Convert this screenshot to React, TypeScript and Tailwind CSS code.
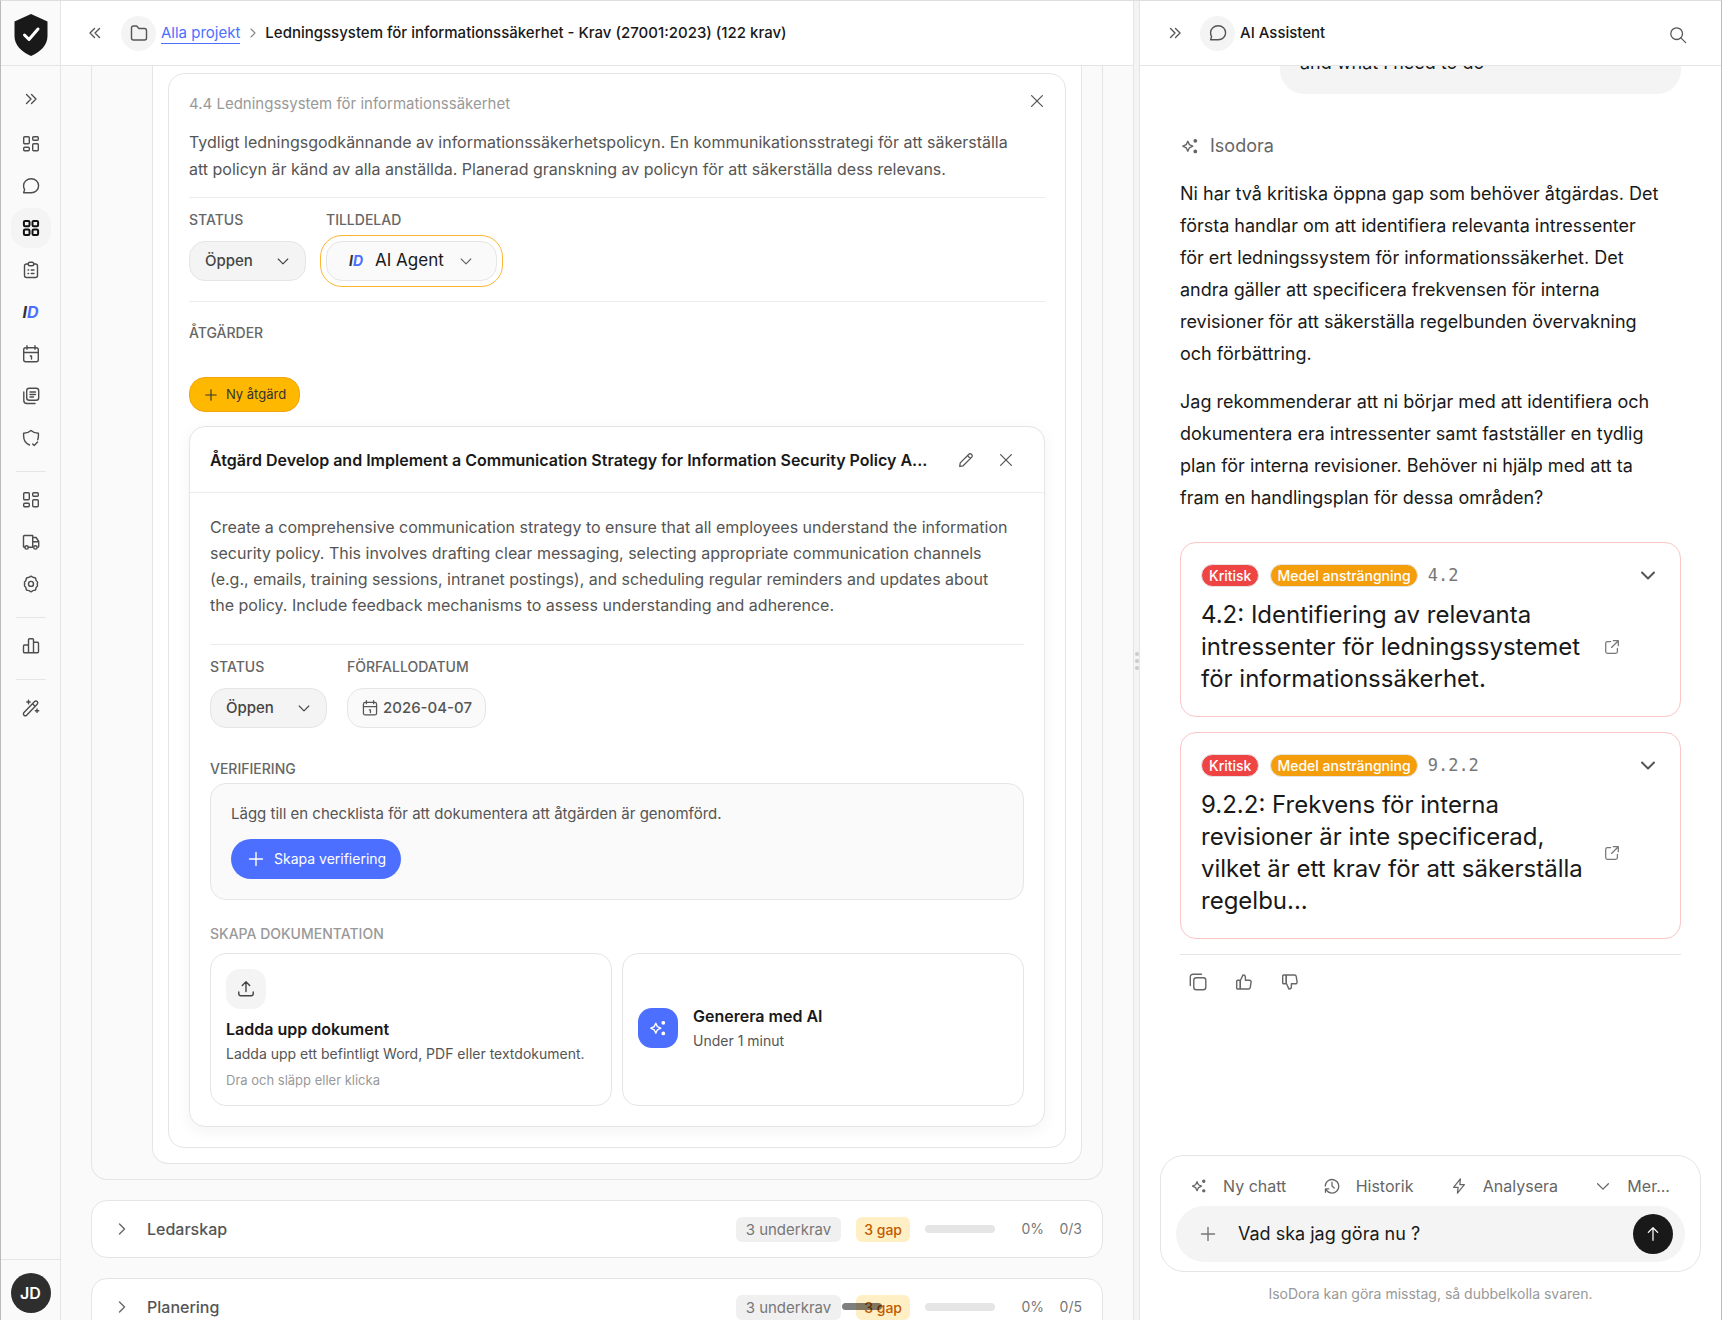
import * as React from 'react';

type IconProps = {
  name: keyof typeof icons;
  className?: string;
};

// Контуры иконок на сетке 20x20
const icons = {
  chevronsRight: <path d="m5.5 5.5 4.5 4.5-4.5 4.5m5-9 4.5 4.5-4.5 4.5" />,
  chevronsLeft: <path d="M14.5 5.5 10 10l4.5 4.5m-5-9L5 10l4.5 4.5" />,
  chevronRight: <path d="m7.5 5 5 5-5 5" />,
  chevronDown: <path d="m4 7.5 6 6 6-6" />,
  dashboard: (
    <>
      <rect x="2.7" y="2.7" width="5.6" height="7" rx="1" />
      <rect x="11.7" y="2.7" width="5.6" height="3.6" rx="1" />
      <rect x="2.7" y="13.2" width="5.6" height="3.6" rx="1" />
      <rect x="11.7" y="9.8" width="5.6" height="7" rx="1" />
    </>
  ),
  grid: (
    <>
      <rect x="2.9" y="2.9" width="5.6" height="5.4" rx="1.2" />
      <rect x="11.5" y="2.9" width="5.6" height="5.4" rx="1.2" />
      <rect x="2.9" y="11.6" width="5.6" height="5.4" rx="1.2" />
      <rect x="11.5" y="11.6" width="5.6" height="5.4" rx="1.2" />
    </>
  ),
  chat: (
    <path d="M10.2 2.8c4.2 0 7.4 3 7.4 7s-3.2 7-7.4 7H2.6l1-3.2a6.8 6.8 0 0 1-1-4c0-4 3.4-6.8 7.6-6.8Z" />
  ),
  clipboard: (
    <>
      <path d="M7.2 4H5.5a2 2 0 0 0-2 2v9.5a2 2 0 0 0 2 2h9a2 2 0 0 0 2-2V6a2 2 0 0 0-2-2h-1.7" />
      <rect x="7.2" y="2.2" width="5.6" height="3.6" rx="1.8" />
      <path d="M7 10h.6m2.6 0H13m-6 3.5h.6m2.6 0H13" />
    </>
  ),
  calendar: (
    <>
      <rect x="2.7" y="3.7" width="14.6" height="14" rx="2" />
      <path d="M2.7 8.5h14.6M6 1.8v3.4m8-3.4v3.4M9.3 12h1.2v3" />
    </>
  ),
  documents: (
    <>
      <rect x="5.7" y="2.3" width="12" height="12" rx="2.5" />
      <path d="M9 6h5.5M9 8.5h5.5M9 11h3.5M2.8 6v8.5a3 3 0 0 0 3 3H14" />
    </>
  ),
  shield: (
    <path d="M8.5 17c-3.6-1.6-5.9-4.7-5.9-9.3V5.2C5.7 5.2 8 4.2 10 2.4c2 1.8 4.3 2.8 7.4 2.8v2.5c0 1.6-.2 2.9-.7 4.1M11.7 16l1.5 1.5 3.4-3.4" />
  ),
  truck: (
    <>
      <path d="M3.9 15.2h-.4a1 1 0 0 1-1-1V4.5a1 1 0 0 1 1-1h8.200v11.700H7.300M11.700 5.500h3.400l2.600 4v4.700a1 1 0 0 1-1 1M11.700 9.800h5.800" />
      <circle cx="5.6" cy="15.4" r="1.7" />
      <circle cx="14.4" cy="15.4" r="1.7" />
    </>
  ),
  gear: (
    <>
      <path d="M8.600 2.900a2 2 0 0 1 2.800 0 2 2 0 0 0 1.500.6 2 2 0 0 1 2 2 2 2 0 0 0 .7 1.500 2 2 0 0 1 .6 2.900 2 2 0 0 0 0 .2 2 2 0 0 1-.6 2.800 2 2 0 0 0-.7 1.500 2 2 0 0 1-2 2 2 2 0 0 0-1.500.6 2 2 0 0 1-2.800 0 2 2 0 0 0-1.500-.6 2 2 0 0 1-2-2 2 2 0 0 0-.7-1.500 2 2 0 0 1-.6-2.900 2 2 0 0 1 .6-2.900 2 2 0 0 0 .7-1.600 2 2 0 0 1 2-2 2 2 0 0 0 1.500-.6Z" />
      <circle cx="10" cy="9.9" r="2.5" />
    </>
  ),
  chart: (
    <path d="M7.5 16.800h-4a1 1 0 0 1-1-1V10a1 1 0 0 1 1-1h4m0 7.800V3.700a1 1 0 0 1 1-1h3a1 1 0 0 1 1 1v13.100m-5 0h5m0-10.600h4a1 1 0 0 1 1 1v8.600a1 1 0 0 1-1 1h-4" />
  ),
  wand: (
    <>
      <path d="M13.600 3.600a1.700 1.700 0 0 1 2.600 2.600L5.600 17.200a1.700 1.700 0 0 1-2.600-2.600Zm-2 2.200 2.600 2.600" />
      <path d="M7.5 2.300v3.400m-1.700-1.700h3.400m6.800 7v3.400m-1.700-1.700h3.400" />
    </>
  ),
  folder: (
    <path d="M2.5 5a2 2 0 0 1 2-2h3.200l2.200 2.500h5.600a2 2 0 0 1 2 2V15a2 2 0 0 1-2 2h-11a2 2 0 0 1-2-2Z" />
  ),
  close: <path d="m4 4 12 12m0-12-12 12" />,
  plus: <path d="M10 3.5v13M3.5 10h13" />,
  pencil: <path d="m3 17 .6-3.8L13.2 3.6a1.900 1.900 0 0 1 2.700 0l.5.5a1.900 1.900 0 0 1 0 2.700L6.800 16.400Zm8.700-11.900 3.200 3.200" />,
  upload: <path d="M10 12.5V2.8M6.3 6.5 10 2.800l3.700 3.700M2.800 13v1.800a2 2 0 0 0 2 2h10.400a2 2 0 0 0 2-2V13" />,
  sparkle: (
    <>
      <path d="M7.8 5.2 9.4 8.6 12.8 10.2 9.4 11.8 7.8 15.2 6.2 11.8 2.8 10.2 6.2 8.6Z" />
      <circle cx="15.3" cy="4.8" r="1.2" fill="currentColor" />
      <circle cx="15.3" cy="15.4" r="1.2" fill="currentColor" />
    </>
  ),
  search: (
    <>
      <circle cx="8.5" cy="8.5" r="6.5" />
      <path d="m13.2 13.200 5.300 5.300" />
    </>
  ),
  external: <path d="M8.5 4H5a2 2 0 0 0-2 2v9a2 2 0 0 0 2 2h9a2 2 0 0 0 2-2v-3.500M11.500 3H17v5.500M17 3l-7.500 7.500" />,
  copy: (
    <>
      <rect x="5.8" y="5.8" width="12" height="12" rx="2.5" />
      <path d="M2.3 13.5V5a2.700 2.700 0 0 1 2.700-2.700h8.500" />
    </>
  ),
  thumbUp: (
    <>
      <path d="M6.3 8.700 9 2.900c1.400 0 2.400 1 2.400 2.300v3h4a1.700 1.700 0 0 1 1.700 2l-.9 5.400a1.700 1.700 0 0 1-1.700 1.400H6.300Z" />
      <rect x="2.7" y="8.2" width="3.6" height="8.8" rx="1" />
    </>
  ),
  thumbDown: (
    <>
      <path d="M6.3 11.300 9 17.100c1.400 0 2.400-1 2.400-2.300v-3h4a1.700 1.700 0 0 0 1.700-2l-.9-5.400A1.700 1.700 0 0 0 14.500 3H6.300Z" />
      <rect x="2.7" y="3" width="3.6" height="8.8" rx="1" />
    </>
  ),
  history: <path d="M3.2 13.5a7.500 7.500 0 1 0-.7-3.500m.2 7v-3.700h3.800M10 5.800V10l2.400 2.200" />,
  bolt: <path d="M11.5 2 4 11.500h5L8.300 18 16 8.500h-5Z" />,
  arrowUp: <path d="M10 17V3M4.800 8.200 10 3l5.200 5.200" />,
};

const Icon = ({ name, className = 'size-5' }: IconProps) => (
  <svg
    viewBox="0 0 20 20"
    fill="none"
    stroke="currentColor"
    strokeWidth="1.4"
    strokeLinecap="round"
    strokeLinejoin="round"
    aria-hidden="true"
    className={`shrink-0 ${className}`}>
    {icons[name]}
  </svg>
);

const IdLogo = ({ className = 'text-base' }: { className?: string }) => (
  <span className={`font-bold italic leading-none text-[#333] ${className}`}>
    I<span className="text-[#4c6fff]">D</span>
  </span>
);

type NavItem = { icon?: keyof typeof icons; label: string; active?: boolean };

const navGroups: NavItem[][] = [
  [
    { icon: 'dashboard', label: 'Översikt' },
    { icon: 'chat', label: 'Chatt' },
    { icon: 'grid', label: 'Projekt', active: true },
    { icon: 'clipboard', label: 'Uppgifter' },
    { label: 'IsoDora' },
    { icon: 'calendar', label: 'Kalender' },
    { icon: 'documents', label: 'Dokument' },
    { icon: 'shield', label: 'Risker' },
  ],
  [
    { icon: 'dashboard', label: 'Tillgångar' },
    { icon: 'truck', label: 'Leverantörer' },
    { icon: 'gear', label: 'Inställningar' },
  ],
  [{ icon: 'chart', label: 'Rapporter' }],
  [{ icon: 'wand', label: 'Verktyg' }],
];

const sections = [
  { title: 'Ledarskap', done: '0/3' },
  { title: 'Planering', done: '0/5' },
];

const gaps = [
  {
    id: '4.2',
    title: '4.2: Identifiering av relevanta intressenter för ledningssystemet för informationssäkerhet.',
  },
  {
    id: '9.2.2',
    title: '9.2.2: Frekvens för interna revisioner är inte specificerad, vilket är ett krav för att säkerställa regelbu...',
  },
];

const chatActions: { icon: keyof typeof icons; label: string }[] = [
  { icon: 'sparkle', label: 'Ny chatt' },
  { icon: 'history', label: 'Historik' },
  { icon: 'bolt', label: 'Analysera' },
  { icon: 'chevronDown', label: 'Mer...' },
];

const Sidebar = () => (
  <aside className="flex w-[60px] shrink-0 flex-col border-r border-[#e5e5e5] bg-[#fafafa]">
    <div className="flex h-[65px] shrink-0 items-center justify-center border-b border-[#e5e5e5] pt-[3px]">
      <svg viewBox="0 0 34 42" className="h-[42px] w-[34px]" aria-label="IsoDora">
        <path d="M17 0 33.500 7.500V22c0 9-6.500 15.500-16.500 20C7 37.500.5 31 .5 22V7.500Z" fill="#191919" />
        <path d="m10.500 21 4.500 4.500 9-10.500" fill="none" stroke="#fff" strokeWidth="3" strokeLinecap="round" strokeLinejoin="round" />
      </svg>
    </div>
    <nav className="flex grow flex-col items-center pt-[13px] text-[#4d4d4d]">
      <button type="button" aria-label="Expandera meny" className="mb-[5px] flex size-10 items-center justify-center">
        <Icon name="chevronsRight" />
      </button>
      {navGroups.map((group, index) => (
        <div key={index} className="flex w-full flex-col items-center">
          {index > 0 && <hr className="mt-[13px] mb-2 w-[30px] border-[#e5e5e5]" />}
          <div className="flex flex-col gap-[2px]">
            {group.map((item) => (
              <button
                key={item.label}
                type="button"
                aria-label={item.label}
                className={`flex size-10 items-center justify-center rounded-2xl ${
                  item.active ? 'bg-[#f4f4f4] text-[#111]' : ''
                }`}>
                {item.icon ? (
                  <Icon name={item.icon} className={item.active ? 'size-5 stroke-2' : 'size-5'} />
                ) : (
                  <IdLogo />
                )}
              </button>
            ))}
          </div>
        </div>
      ))}
    </nav>
    <div className="flex justify-center border-t border-[#e5e5e5] pt-[13px] pb-[7px]">
      <button type="button" className="size-10 rounded-full bg-[#2e2e2e] text-base font-semibold text-white">
        JD
      </button>
    </div>
  </aside>
);

const StatusSelect = ({ id }: { id: string }) => (
  <div className="flex flex-col gap-[11px]">
    <label htmlFor={id} className="text-sm font-medium text-[#666]">
      STATUS
    </label>
    <div className="flex h-10 w-[117px] items-center rounded-2xl border border-[#e5e5e5] bg-[#f4f4f4] pr-[14px] pl-[15px] text-[#444]">
      <select id={id} className="min-w-0 grow appearance-none text-[15px] font-medium outline-none">
        <option>Öppen</option>
        <option>Stängd</option>
      </select>
      <Icon name="chevronDown" className="size-4" />
    </div>
  </div>
);

const ActionCard = () => (
  <section className="rounded-2xl border border-[#e5e5e5] bg-white shadow-[0_4px_16px_rgba(0,0,0,0.05)]">
    <header className="flex h-[66px] items-center border-b border-[#ececec] pr-[18px] pl-5">
      <h3 className="min-w-0 grow truncate text-base font-semibold text-[#191919]">
        Åtgärd Develop and Implement a Communication Strategy for Information Security Policy A...
      </h3>
      <div className="flex shrink-0 text-[#555]">
        <button type="button" aria-label="Redigera" className="flex size-10 items-center justify-center">
          <Icon name="pencil" className="size-[18px]" />
        </button>
        <button type="button" aria-label="Stäng åtgärd" className="flex size-10 items-center justify-center">
          <Icon name="close" className="size-[18px]" />
        </button>
      </div>
    </header>
    <div className="px-5 pt-[21px] pb-5">
      <p className="pr-3 text-base leading-[26px] text-[#555]">
        Create a comprehensive communication strategy to ensure that all employees understand the information
        security policy. This involves drafting clear messaging, selecting appropriate communication channels
        (e.g., emails, training sessions, intranet postings), and scheduling regular reminders and updates about
        the policy. Include feedback mechanisms to assess understanding and adherence.
      </p>
      <div className="mt-[26px] flex gap-5 border-t border-[#ececec] pt-3">
        <StatusSelect id="action-status" />
        <div className="flex flex-col gap-[11px]">
          <label htmlFor="due-date" className="text-sm font-medium text-[#666]">
            FÖRFALLODATUM
          </label>
          <button
            id="due-date"
            type="button"
            className="flex h-10 w-[139px] items-center gap-1 rounded-2xl border border-[#e5e5e5] bg-[#fafafa] px-[13px] text-[15px] font-medium text-[#555]">
            <Icon name="calendar" className="size-[18px]" />
            2026-04-07
          </button>
        </div>
      </div>
      <h4 className="mt-[31px] text-sm font-medium text-[#666]">VERIFIERING</h4>
      <div className="mt-1 rounded-2xl border border-[#e5e5e5] bg-[#fafafa] p-5 pt-[18px]">
        <p className="text-[15px] leading-6 text-[#555]">Lägg till en checklista för att dokumentera att åtgärden är genomförd.</p>
        <button
          type="button"
          className="mt-[13px] flex h-10 items-center gap-2 rounded-[20px] bg-[#4c6fff] px-[15px] text-sm text-white">
          <Icon name="plus" />
          Skapa verifiering
        </button>
      </div>
      <h4 className="mt-6 text-sm font-medium text-[#999]">SKAPA DOKUMENTATION</h4>
      <div className="mt-[9px] grid grid-cols-2 gap-[10px]">
        <button type="button" className="rounded-2xl border border-[#e5e5e5] p-[15px] text-left">
          <span className="flex size-10 items-center justify-center rounded-[14px] bg-[#f4f4f4] text-[#444]">
            <Icon name="upload" />
          </span>
          <span className="mt-2 block text-base font-semibold text-[#191919]">Ladda upp dokument</span>
          <span className="mt-[3px] block text-sm text-[#555]">Ladda upp ett befintligt Word, PDF eller textdokument.</span>
          <span className="mt-[6px] block text-[13px] leading-5 text-[#999]">Dra och släpp eller klicka</span>
        </button>
        <button type="button" className="flex items-center gap-[15px] rounded-2xl border border-[#e5e5e5] px-[15px] pb-1 text-left">
          <span className="flex size-10 items-center justify-center rounded-[14px] bg-[#4c6fff] text-white">
            <Icon name="sparkle" />
          </span>
          <span>
            <span className="block text-base font-semibold text-[#191919]">Generera med AI</span>
            <span className="mt-[3px] block text-sm text-[#555]">Under 1 minut</span>
          </span>
        </button>
      </div>
    </div>
  </section>
);

const RequirementPanel = () => (
  <div className="rounded-b-2xl border border-t-0 border-[#e5e5e5] pr-5 pb-[15px] pl-[60px]">
    <div className="rounded-b-2xl border border-t-0 border-[#e5e5e5] bg-white px-[15px] pt-[7px] pb-[15px]">
      <article className="rounded-2xl border border-[#e5e5e5] px-5 pt-[15px] pb-5">
        <div className="flex items-start justify-between">
          <h2 className="mt-[3px] text-[15px] leading-6 text-[#999]">4.4 Ledningssystem för informationssäkerhet</h2>
          <button type="button" aria-label="Stäng krav" className="-mr-1 flex size-6 items-center justify-center text-[#555]">
            <Icon name="close" className="size-[18px]" />
          </button>
        </div>
        <p className="mt-[13px] pr-5 text-base leading-[27px] text-[#555]">
          Tydligt ledningsgodkännande av informationssäkerhetspolicyn. En kommunikationsstrategi för att säkerställa
          att policyn är känd av alla anställda. Planerad granskning av policyn för att säkerställa dess relevans.
        </p>
        <div className="mt-[14px] flex gap-5 border-y border-[#ececec] pt-3 pb-5">
          <StatusSelect id="requirement-status" />
          <div className="flex flex-col gap-[11px]">
            <label htmlFor="assignee" className="text-sm font-medium text-[#666]">
              TILLDELAD
            </label>
            <div className="flex h-10 w-[171px] items-center rounded-2xl border border-[#e5e5e5] bg-[#fafafa] px-[22px] outline outline-offset-[5px] outline-[#fdb62f]">
              <IdLogo className="mr-3 text-sm" />
              <select id="assignee" className="min-w-0 grow appearance-none text-[17px] text-[#191919] outline-none">
                <option>AI Agent</option>
              </select>
              <Icon name="chevronDown" className="size-4 text-[#666]" />
            </div>
          </div>
        </div>
        <h3 className="mt-[21px] text-sm font-medium text-[#666]">ÅTGÄRDER</h3>
        <button
          type="button"
          className="mt-[34px] mb-[14px] flex h-[35px] items-center gap-[7px] rounded-2xl border border-[#f5a310] bg-[#ffb800] px-[13px] text-[13px] text-[#333]">
          <Icon name="plus" className="size-4" />
          Ny åtgärd
        </button>
        <ActionCard />
      </article>
    </div>
  </div>
);

const SectionRow = ({ title, done }: { title: string; done: string }) => (
  <button
    type="button"
    className="mt-5 flex h-[58px] w-full shrink-0 items-center rounded-2xl border border-[#e5e5e5] bg-white px-5 text-sm text-[#666]">
    <Icon name="chevronRight" />
    <span className="ml-[15px] grow text-left text-base font-medium text-[#555]">{title}</span>
    <span className="rounded-md bg-[#f0f0f0] px-[10px] text-[15px] leading-[25px] text-[#777]">3 underkrav</span>
    <span className="ml-[15px] rounded-md bg-[#ffefc4] px-2 leading-[25px] font-medium text-[#c05a00]">3 gap</span>
    <span className="ml-[15px] h-2 w-[70px] rounded-full bg-[#e5e5e5]" />
    <span className="w-[49px] text-right text-[#777]">0%</span>
    <span className="w-[38px] text-right text-[#777]">{done}</span>
  </button>
);

const MainPanel = () => (
  <main className="relative flex min-w-0 grow flex-col bg-[#fafafa]">
    <header className="flex h-[65px] shrink-0 items-center border-b border-[#e5e5e5] bg-white pl-6 text-[#555]">
      <button type="button" aria-label="Fäll ihop" className="flex size-5 items-center justify-center">
        <Icon name="chevronsLeft" />
      </button>
      <span className="ml-4 flex size-[35px] items-center justify-center rounded-full bg-[#f4f4f4]">
        <Icon name="folder" />
      </span>
      <a href="#projekt" className="ml-[5px] border-b border-[#4c6fff] text-[15px] leading-5 text-[#4c6fff]">
        Alla projekt
      </a>
      <Icon name="chevronRight" className="mr-1 ml-[5px] size-4 text-[#888]" />
      <h1 className="text-[15px] font-medium text-[#191919]">
        Ledningssystem för informationssäkerhet - Krav (27001:2023) (122 krav)
      </h1>
    </header>
    <div className="min-h-0 grow overflow-hidden px-[30px]">
      <RequirementPanel />
      {sections.map((section) => (
        <SectionRow key={section.title} title={section.title} done={section.done} />
      ))}
    </div>
    {/* Ручка нижней панели поверх списка */}
    <div className="absolute bottom-[10px] left-[781px] h-[7px] w-10 rounded-full bg-black/50" />
  </main>
);

const GapCard = ({ id, title }: { id: string; title: string }) => (
  <article className="rounded-2xl border border-[#fbc6c6] px-5 pt-[19px] pb-[21px]">
    <div className="flex h-[26px] items-center gap-[11px] text-sm font-medium text-white">
      <span className="rounded-full border border-[#e5e5e5] bg-[#ef4444] px-[7px] leading-[21px]">Kritisk</span>
      <span className="-mr-px rounded-full border border-[#e5e5e5] bg-[#f59e0b] px-[6px] leading-[21px]">Medel ansträngning</span>
      <span className="grow font-['DejaVu_Sans_Mono',monospace] text-[17px] font-normal text-[#777]">{id}</span>
      <button type="button" aria-label={`Visa ${id}`} className="mr-[2px] text-[#555]">
        <Icon name="chevronDown" className="size-5 stroke-2" />
      </button>
    </div>
    <div className="mt-[11px] flex items-center">
      <h3 className="w-[388px] text-2xl leading-[32px] text-[#191919]">{title}</h3>
      <a href={`#${id}`} aria-label={`Öppna ${id}`} className="ml-[14px] text-[#777]">
        <Icon name="external" className="size-[18px]" />
      </a>
    </div>
  </article>
);

const AssistantPanel = () => {
  const [message, setMessage] = React.useState('Vad ska jag göra nu ?');

  return (
    <aside className="flex w-[582px] shrink-0 flex-col border-l border-[#e5e5e5] bg-white">
      <header className="flex h-[65px] shrink-0 items-center border-b border-[#e5e5e5] pr-[34px] pl-[25px] text-[#555]">
        <button type="button" aria-label="Stäng assistent">
          <Icon name="chevronsRight" />
        </button>
        <span className="ml-[15px] flex size-[35px] items-center justify-center rounded-full bg-[#f4f4f4]">
          <Icon name="chat" />
        </span>
        <h2 className="ml-[5px] grow text-[15px] font-medium text-[#191919]">AI Assistent</h2>
        <button type="button" aria-label="Sök" className="pt-1">
          <Icon name="search" className="size-[18px]" />
        </button>
      </header>
      <div className="min-h-0 grow overflow-hidden px-10 text-lg leading-[32px] text-[#191919]">
        <div className="-mt-[19px] ml-[100px] rounded-b-3xl bg-[#f4f4f4] px-5 pb-[15px]">and what I need to do</div>
        <div className="mt-9 flex items-center gap-[10px] text-[#666]">
          <Icon name="sparkle" />
          Isodora
        </div>
        <div className="mt-4 flex flex-col gap-4 pr-5">
          <p>
            Ni har två kritiska öppna gap som behöver åtgärdas. Det första handlar om att identifiera relevanta
            intressenter för ert ledningssystem för informationssäkerhet. Det andra gäller att specificera frekvensen
            för interna revisioner för att säkerställa regelbunden övervakning och förbättring.
          </p>
          <p>
            Jag rekommenderar att ni börjar med att identifiera och dokumentera era intressenter samt fastställer en
            tydlig plan för interna revisioner. Behöver ni hjälp med att ta fram en handlingsplan för dessa områden?
          </p>
        </div>
        <div className="mt-7 flex flex-col gap-[15px]">
          {gaps.map((gap) => (
            <GapCard key={gap.id} id={gap.id} title={gap.title} />
          ))}
        </div>
        <div className="mt-[15px] flex gap-[26px] border-t border-[#e5e5e5] px-2 pt-[17px] text-[#666]">
          <button type="button" aria-label="Kopiera">
            <Icon name="copy" />
          </button>
          <button type="button" aria-label="Bra svar">
            <Icon name="thumbUp" />
          </button>
          <button type="button" aria-label="Dåligt svar">
            <Icon name="thumbDown" />
          </button>
        </div>
      </div>
      <form className="mx-5 shrink-0 rounded-3xl border border-[#e5e5e5] px-[15px] pt-[18px] pb-[9px]">
        <div className="flex justify-between pr-[15px] pl-[14px] text-base text-[#666]">
          {chatActions.map((action) => (
            <button key={action.label} type="button" className="flex items-center gap-[15px]">
              <Icon name={action.icon} className="size-[18px]" />
              {action.label}
            </button>
          ))}
        </div>
        <div className="mt-2 flex h-14 items-center rounded-[28px] bg-[#f4f4f4] pr-3 pl-[22px]">
          <button type="button" aria-label="Bifoga" className="text-[#777]">
            <Icon name="plus" />
          </button>
          <input
            aria-label="Meddelande"
            className="ml-5 min-w-0 grow text-lg text-[#191919] outline-none"
            value={message}
            onChange={(event) => setMessage(event.target.value)}
          />
          <button type="button" aria-label="Skicka" className="flex size-10 items-center justify-center rounded-full bg-[#191919] text-white">
            <Icon name="arrowUp" className="size-[18px]" />
          </button>
        </div>
      </form>
      <p className="mt-3 mb-4 text-center text-sm text-[#999]">IsoDora kan göra misstag, så dubbelkolla svaren.</p>
    </aside>
  );
};

export default function App() {
  return (
    <div className="flex h-screen overflow-hidden border-t border-r border-l border-t-[#dedede] border-r-[#bbb] border-l-[#bbb] bg-white font-[Inter,sans-serif]">
      <Sidebar />
      <MainPanel />
      <div className="flex w-[6px] shrink-0 flex-col items-center justify-center gap-[3px] border-l border-[#e5e5e5] bg-[#f4f4f4]">
        <span className="size-1 rounded-full bg-[#ccc]" />
        <span className="size-1 rounded-full bg-[#ccc]" />
        <span className="size-1 rounded-full bg-[#ccc]" />
      </div>
      <AssistantPanel />
    </div>
  );
}
